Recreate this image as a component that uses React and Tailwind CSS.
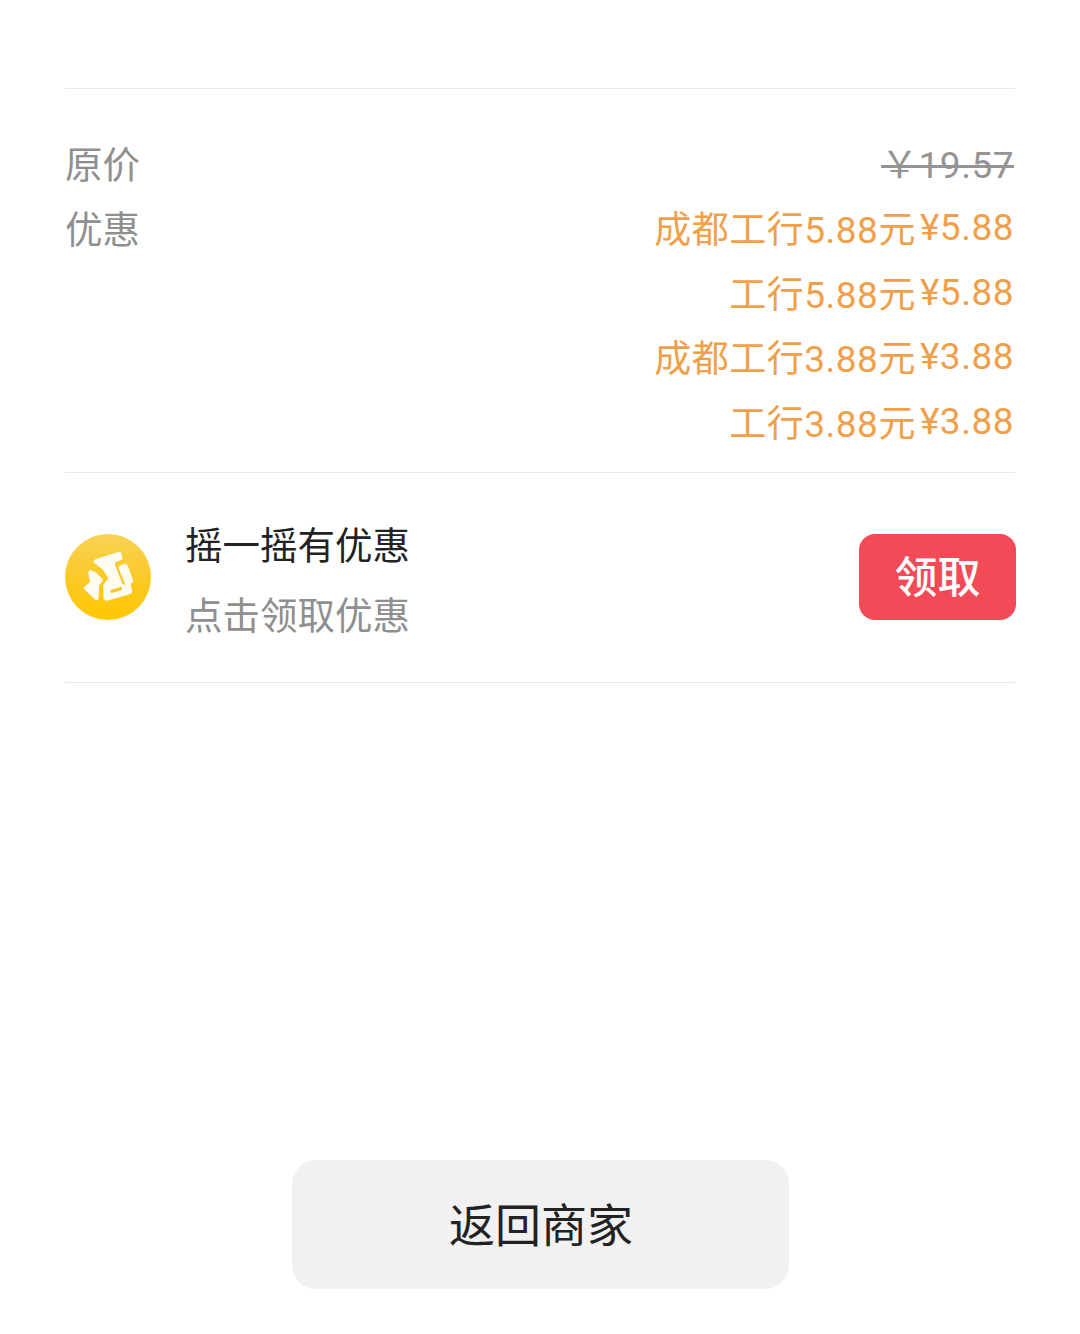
import React from 'react';

const discounts = [
    { label: '成都工行5.88元', amount: '5.88' },
    { label: '工行5.88元', amount: '5.88' },
    { label: '成都工行3.88元', amount: '3.88' },
    { label: '工行3.88元', amount: '3.88' },
];

const ShakeIcon = () => (
    <svg width="86" height="86" viewBox="0 0 86 86" className="shrink-0">
        <defs>
            <linearGradient id="shake" x1="0" y1="0" x2="0" y2="1">
                <stop offset="0" stopColor="#f8d254" />
                <stop offset="0.65" stopColor="#fbc81c" />
                <stop offset="1" stopColor="#ffc800" />
            </linearGradient>
        </defs>
        <circle cx="43" cy="43" r="43" fill="url(#shake)" />
        {/* ticket body */}
        <path d="M30 25.5 L53 18 Q56 17.2 56.6 20 L57.5 25.5 L51 28 Q49.5 29 50 31 L57 49 Q58 51 60 50.5 L64 49.5 Q65.5 49.5 66 51 L67 57 Q67.4 59 65.5 60 L43 66.6 Q39 67.5 38.4 63 L38.3 51 L43.3 44.3 L38.3 36 L29 28.5 Q28 26.5 30 25.5 Z" fill="#fffdf2" />
        <path d="M55 31.5 L59.5 30 Q61.8 29.4 62.6 31.5 L68 46 Q68.8 48.5 66.5 49.4 L63 50.5 Q60.6 51 59.8 49 L53.6 34 Q53 32.2 55 31.5 Z" fill="#fffdf2" />
        {/* torn stub */}
        <path d="M25 36 L31 38.5 L38.3 46 L34.3 51 L33.5 65 Q32.5 67 30.3 66 L18.3 54.3 L25 47.7 L23.3 39.3 Q23.3 36.5 25 36 Z" fill="#fffdf2" />
        <path d="M45.7 57.7 L56.7 54.3" stroke="#f7c52a" strokeWidth="3" />
    </svg>
);

export default function App() {
    return (
        <div className="w-[1080px] h-[1334px] bg-white flex flex-col font-['Roboto','Noto_Sans_CJK_SC',sans-serif]">
            <div className="mx-[65px] mt-[88px] border-t border-b border-[#e8e8e8] pt-[44px] pb-[17px]">
                <div className="flex justify-between h-[64px] items-start text-[37px] leading-[64px]">
                    <span className="text-[37.5px] text-[#8f8f8f]">原价</span>
                    <span className="pr-px pt-px text-[#949494] line-through tracking-[0.5px]">￥19.57</span>
                </div>
                <div className="flex justify-between items-start text-[37px] leading-[64.5px]">
                    <span className="pt-px text-[37.5px] text-[#8f8f8f]">优惠</span>
                    <div className="flex flex-col items-end pr-px tracking-[0.5px] text-[#f0a04b]">
                        {discounts.map((d) => (
                            <div key={d.label}>
                                <span className="inline-block translate-y-[2px]">{d.label}</span>
                                <span className="inline-block ml-[4px] -translate-y-px">¥{d.amount}</span>
                            </div>
                        ))}
                    </div>
                </div>
            </div>
            <div className="mx-[65px] h-[210px] border-b border-[#e8e8e8] flex items-start justify-between pt-[61px]">
                <div className="flex items-start gap-[34px]">
                    <ShakeIcon />
                    <div className="-mt-[16px] flex flex-col gap-[14px] text-[37.5px] leading-[56px]">
                        <span className="text-[#222222]">摇一摇有优惠</span>
                        <span className="text-[#8f8f8f]">点击领取优惠</span>
                    </div>
                </div>
                <button className="w-[157px] h-[86px] -mr-px pt-[3px] rounded-[16px] bg-[#f34a58] text-white text-[43px] font-medium">领取</button>
            </div>
            <div className="flex-1 flex justify-center items-end pb-[45px]">
                <button className="w-[497px] h-[129px] pt-[4px] pl-[2px] rounded-[24px] bg-[#f1f1f1] text-[#222222] text-[46px]">返回商家</button>
            </div>
        </div>
    );
}
